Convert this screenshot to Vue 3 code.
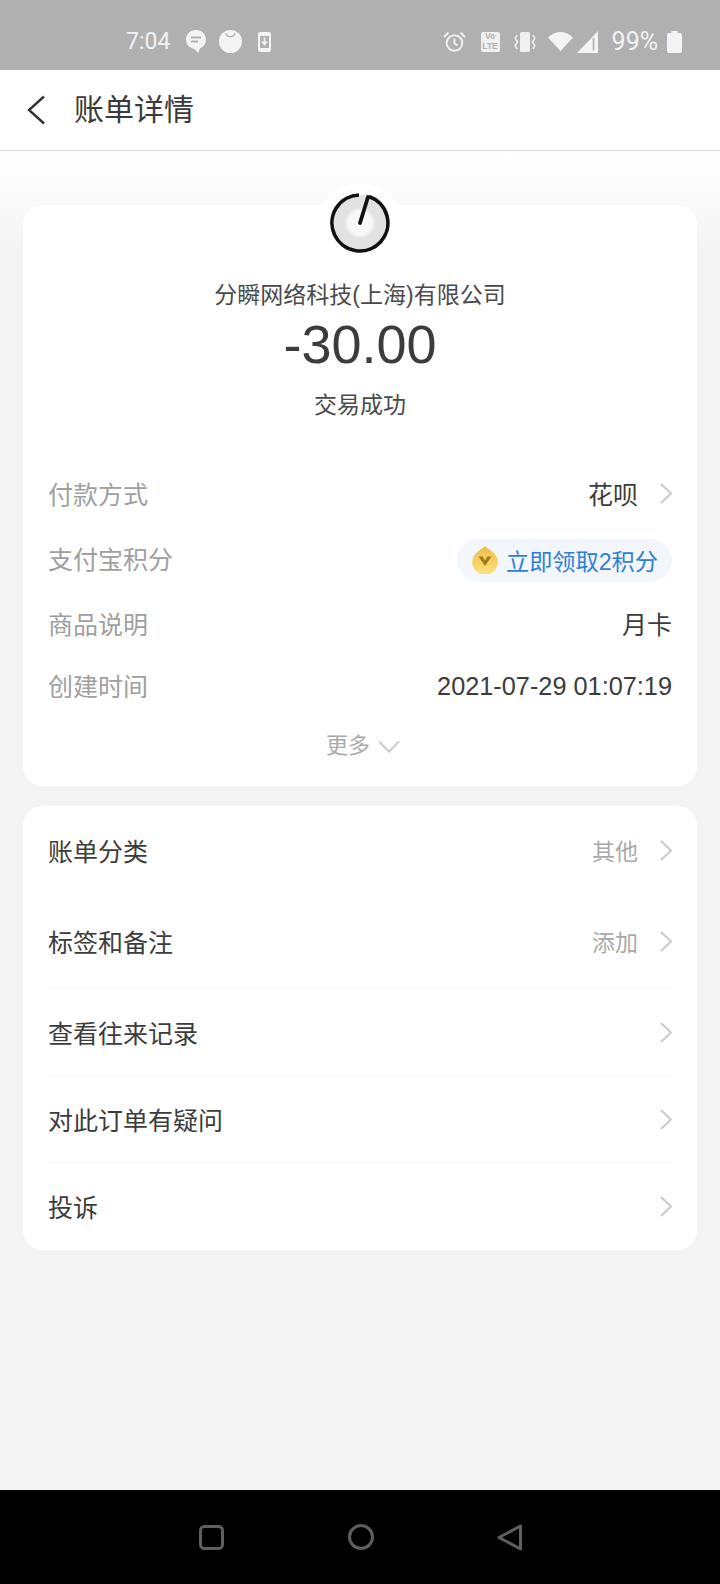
<template>
  <div class="screen">
    <div class="status-bar">
      <div class="status-left">
        <span class="time">7:04</span>
        <svg class="ic-bubble" width="20" height="23" viewBox="0 0 20 23"><path d="M10 0c5.500 0 10 4 10 9.500 0 4.500-2.800 7.500-6 9l-2 4.500-3.500-4C3.500 18 0 14.500 0 9.500 0 4 4.500 0 10 0z" fill="#f4f4f4" /><path d="M5 7.500h10M5 11.500h7" stroke="#b0b0b0" stroke-width="2" /></svg>
        <svg class="ic-face" width="23" height="23" viewBox="0 0 23 23"><circle cx="11.500" cy="11.500" r="11.500" fill="#f4f4f4" /><path d="M7 3c.8 5 8.200 5 9 0" fill="none" stroke="#b0b0b0" stroke-width="1.400" /></svg>
        <svg class="ic-dl" width="13" height="20" viewBox="0 0 13 20"><rect width="13" height="20" rx="2" fill="#f4f4f4" /><rect x="2" y="4" width="9" height="12" fill="#b0b0b0" /><path d="M6.500 5.500v6M4 9.500l2.500 3 2.500-3" fill="none" stroke="#f4f4f4" stroke-width="1.600" /></svg>
      </div>
      <div class="status-right">
        <svg width="23" height="21" viewBox="0 0 23 21" fill="none" stroke="#f0f0f0" stroke-width="2"><circle cx="11.500" cy="12" r="7.800" /><path d="M11.500 7.500V12.500l3 2M1 6l4.500-4.500M22 6l-4.500-4.500" /></svg>
        <div class="volte"><span>Vo</span><span>LTE</span></div>
        <svg class="ic-vib" width="22" height="20" viewBox="0 0 22 20"><rect x="6" y="0" width="10" height="20" rx="1.500" fill="#f0f0f0" /><path d="M3 3 1.200 6.500 3.500 10 1.200 13.500 3 17M19 3l1.800 3.500L18.500 10l2.300 3.500L19 17" fill="none" stroke="#f0f0f0" stroke-width="1.600" /></svg>
        <svg class="ic-wifi" width="25" height="19" viewBox="0 0 25 19"><path d="M0 5.500C3.500 2 8 0 12.500 0S21.500 2 25 5.500L12.500 19z" fill="#f4f4f4" /></svg>
        <svg class="ic-signal" width="21" height="22" viewBox="0 0 21 22"><path d="M21 0v22H0z" fill="#f4f4f4" /><path d="M16.500 7v12.500" stroke="#b0b0b0" stroke-width="1.600" /></svg>
        <span class="battery-text">99%</span>
        <svg class="ic-battery" width="15" height="22" viewBox="0 0 15 22"><path d="M4.500 0h6v2H13a2 2 0 0 1 2 2v16a2 2 0 0 1-2 2H2a2 2 0 0 1-2-2V4a2 2 0 0 1 2-2h2.500z" fill="#f4f4f4" /></svg>
      </div>
    </div>

    <div class="header">
      <svg class="back" width="18" height="30" viewBox="0 0 18 30" fill="none" stroke="#333" stroke-width="2.400"><path d="M17 1.500 2 15l15 13.500" /></svg>
      <span class="title">账单详情</span>
    </div>

    <div class="content">
      <div class="card summary">
        <div class="logo-wrap">
          <svg width="60" height="60" viewBox="0 0 60 60">
            <defs>
              <radialGradient id="disc">
                <stop offset="0.42" stop-color="#f8f8f8" />
                <stop offset="0.56" stop-color="#e2e2e2" />
              </radialGradient>
            </defs>
            <circle cx="30" cy="30" r="28" fill="url(#disc)" />
            <path d="M29 2A28 28 0 1 0 39 3.500" fill="none" stroke="#111" stroke-width="3.600" />
            <path d="M30 30 38 4" stroke="#111" stroke-width="3.800" stroke-linecap="round" />
          </svg>
        </div>
        <div class="merchant">分瞬网络科技(上海)有限公司</div>
        <div class="amount">-30.00</div>
        <div class="state">交易成功</div>

        <div class="info-row first">
          <span class="label">付款方式</span>
          <span class="value">花呗<svg class="chev" width="12" height="21" viewBox="0 0 12 21"><path d="M1 1 11 10.500 1 20" /></svg></span>
        </div>
        <div class="info-row second">
          <span class="label">支付宝积分</span>
          <span class="pill">
            <svg width="26" height="28" viewBox="0 0 26 28">
              <defs>
                <linearGradient id="coin" x1="0" y1="0" x2="0" y2="1">
                  <stop offset="0" stop-color="#eebd4a" />
                  <stop offset="1" stop-color="#fbe27f" />
                </linearGradient>
              </defs>
              <path d="M13 0C14.500 2 17 3 20 5.500A12.800 12.800 0 1 1 6 5.500C9 3 11.500 2 13 0z" fill="url(#coin)" />
              <path d="M6.500 10.500h4.200l2.300 4 2.300-4h4.200L13 20z" fill="#a07b1e" />
            </svg>
            立即领取2积分
          </span>
        </div>
        <div class="info-row third">
          <span class="label">商品说明</span>
          <span class="value">月卡</span>
        </div>
        <div class="info-row fourth">
          <span class="label">创建时间</span>
          <span class="value date">2021-07-29 01:07:19</span>
        </div>
        <div class="more">更多<svg width="22" height="13" viewBox="0 0 22 13" fill="none" stroke="#ccc" stroke-width="2"><path d="M1 1.500 11 11.500 21 1.500" /></svg></div>
      </div>

      <div class="card actions">
        <div v-for="item in actions" :key="item.label" class="action-row" :class="item.cls">
          <span class="action-label">{{ item.label }}</span>
          <span class="action-value">
            {{ item.value }}
            <svg class="chev" width="12" height="21" viewBox="0 0 12 21"><path d="M1 1 11 10.500 1 20" /></svg>
          </span>
        </div>
      </div>
    </div>

    <div class="nav-bar">
      <svg width="25" height="25" viewBox="0 0 25 25" fill="none" stroke="#5f5f5f" stroke-width="3"><rect x="1.500" y="1.500" width="22" height="22" rx="4" /></svg>
      <svg width="26" height="26" viewBox="0 0 26 26" fill="none" stroke="#5f5f5f" stroke-width="3"><circle cx="13" cy="13" r="11.500" /></svg>
      <svg width="25" height="27" viewBox="0 0 25 27" fill="none" stroke="#5f5f5f" stroke-width="3" stroke-linejoin="round"><path d="M23.500 2v23L2 13.500z" /></svg>
    </div>
  </div>
</template>

<script setup>
const actions = [
  { label: "账单分类", value: "其他", cls: "tall" },
  { label: "标签和备注", value: "添加", cls: "tall" },
  { label: "查看往来记录", value: "", cls: "line" },
  { label: "对此订单有疑问", value: "", cls: "line" },
  { label: "投诉", value: "", cls: "line" },
];
</script>

<style>
body {
  margin: 0;
  background: #f4f4f4;
}
</style>

<style scoped>
.screen {
  width: 720px;
  height: 1584px;
  display: flex;
  flex-direction: column;
  overflow: hidden;
  font-family: "Liberation Sans", "Noto Sans CJK SC", sans-serif;
  color: #333;
}

.status-bar {
  height: 70px;
  flex: none;
  background: #b0b0b0;
  display: flex;
  align-items: center;
  justify-content: space-between;
  padding: 13px 38px 0 126px;
  box-sizing: border-box;
  color: #f2f2f2;
}

.status-left,
.status-right {
  display: flex;
  align-items: center;
}

.time {
  font-family: Roboto, sans-serif;
  font-size: 23px;
}

.ic-bubble {
  margin-left: 16px;
}

.ic-face {
  margin-left: 13px;
}

.ic-dl {
  margin-left: 16px;
}

.volte {
  margin-left: 15px;
  width: 19px;
  height: 20px;
  background: #f0f0f0;
  border-radius: 2px;
  color: #b0b0b0;
  font-size: 8.500px;
  font-weight: bold;
  line-height: 9.500px;
  display: flex;
  flex-direction: column;
  align-items: center;
  justify-content: center;
}

.ic-vib {
  margin-left: 14px;
}

.ic-wifi {
  margin-left: 12px;
}

.ic-signal {
  margin-left: 4px;
}

.battery-text {
  font-family: Roboto, sans-serif;
  font-size: 25px;
  margin-left: 14px;
}

.ic-battery {
  margin-left: 9px;
}

.header {
  height: 81px;
  flex: none;
  background: #fff;
  border-bottom: 1px solid #dedede;
  box-sizing: border-box;
  display: flex;
  align-items: center;
  padding: 0 0 6px 27px;
}

.back {
  margin-right: 29px;
  position: relative;
  top: 3px;
}

.title {
  font-size: 30px;
  color: #3a3a3a;
}

.content {
  flex: 1;
  padding: 54px 23px 0 23px;
  background: linear-gradient(#fff 0, #f4f4f4 100px);
}

.card {
  background: #fff;
  border-radius: 20px;
}

.summary {
  position: relative;
  height: 581px;
  padding: 0 25px;
  box-sizing: border-box;
  margin-bottom: 20px;
  display: flex;
  flex-direction: column;
}

.logo-wrap {
  position: absolute;
  top: -22px;
  left: 50%;
  margin-left: -42px;
  width: 84px;
  height: 84px;
  background: #fff;
  border-radius: 50%;
  display: flex;
  align-items: center;
  justify-content: center;
  padding-bottom: 4px;
  box-sizing: border-box;
}

.merchant {
  margin-top: 75px;
  font-size: 23px;
  line-height: 30px;
  text-align: center;
  color: #4a4a4a;
}

.amount {
  font-size: 54px;
  line-height: 60px;
  margin-top: 4px;
  text-align: center;
  color: #3c3c3c;
}

.state {
  font-size: 23px;
  line-height: 30px;
  margin-top: 16px;
  text-align: center;
  color: #4a4a4a;
}

.info-row {
  display: flex;
  align-items: center;
  justify-content: space-between;
  height: 40px;
}

.first {
  margin-top: 53px;
}

.second {
  margin-top: 25px;
}

.third {
  margin-top: 25px;
}

.fourth {
  margin-top: 22px;
}

.label {
  font-size: 25px;
  color: #a0a0a0;
}

.value {
  font-size: 25px;
  color: #3c3c3c;
  display: flex;
  align-items: center;
}

.date {
  font-size: 25.300px;
  padding-top: 3px;
}

.chev {
  fill: none;
  stroke: #cccccc;
  stroke-width: 2.200;
  margin-left: 22px;
}

.pill {
  height: 43px;
  padding: 0 14px 0 15px;
  border-radius: 22px;
  background: #f3f7fd;
  color: #2f7fd8;
  font-size: 23.200px;
  display: flex;
  align-items: center;
  gap: 8px;
  position: relative;
  top: 2px;
}

.more {
  margin-top: 26px;
  padding-left: 6px;
  display: flex;
  align-items: center;
  justify-content: center;
  gap: 8px;
  font-size: 22px;
  line-height: 30px;
  color: #aaa;
}

.actions {
  padding: 0 25px;
  height: 444px;
  box-sizing: border-box;
}

.action-row {
  display: flex;
  align-items: center;
  justify-content: space-between;
}

.action-row.tall {
  height: 91px;
  box-sizing: border-box;
  padding-bottom: 3px;
}

.action-row.line {
  height: 87px;
  box-sizing: border-box;
  border-top: 1px solid #f8f8f8;
}

.action-label {
  font-size: 25px;
  color: #3c3c3c;
}

.action-value {
  display: flex;
  align-items: center;
  font-size: 23px;
  color: #aaa;
}

.nav-bar {
  height: 94px;
  flex: none;
  box-sizing: border-box;
  background: #000;
  display: flex;
  align-items: center;
  justify-content: space-between;
  padding: 0 198px 0 199px;
}
</style>
